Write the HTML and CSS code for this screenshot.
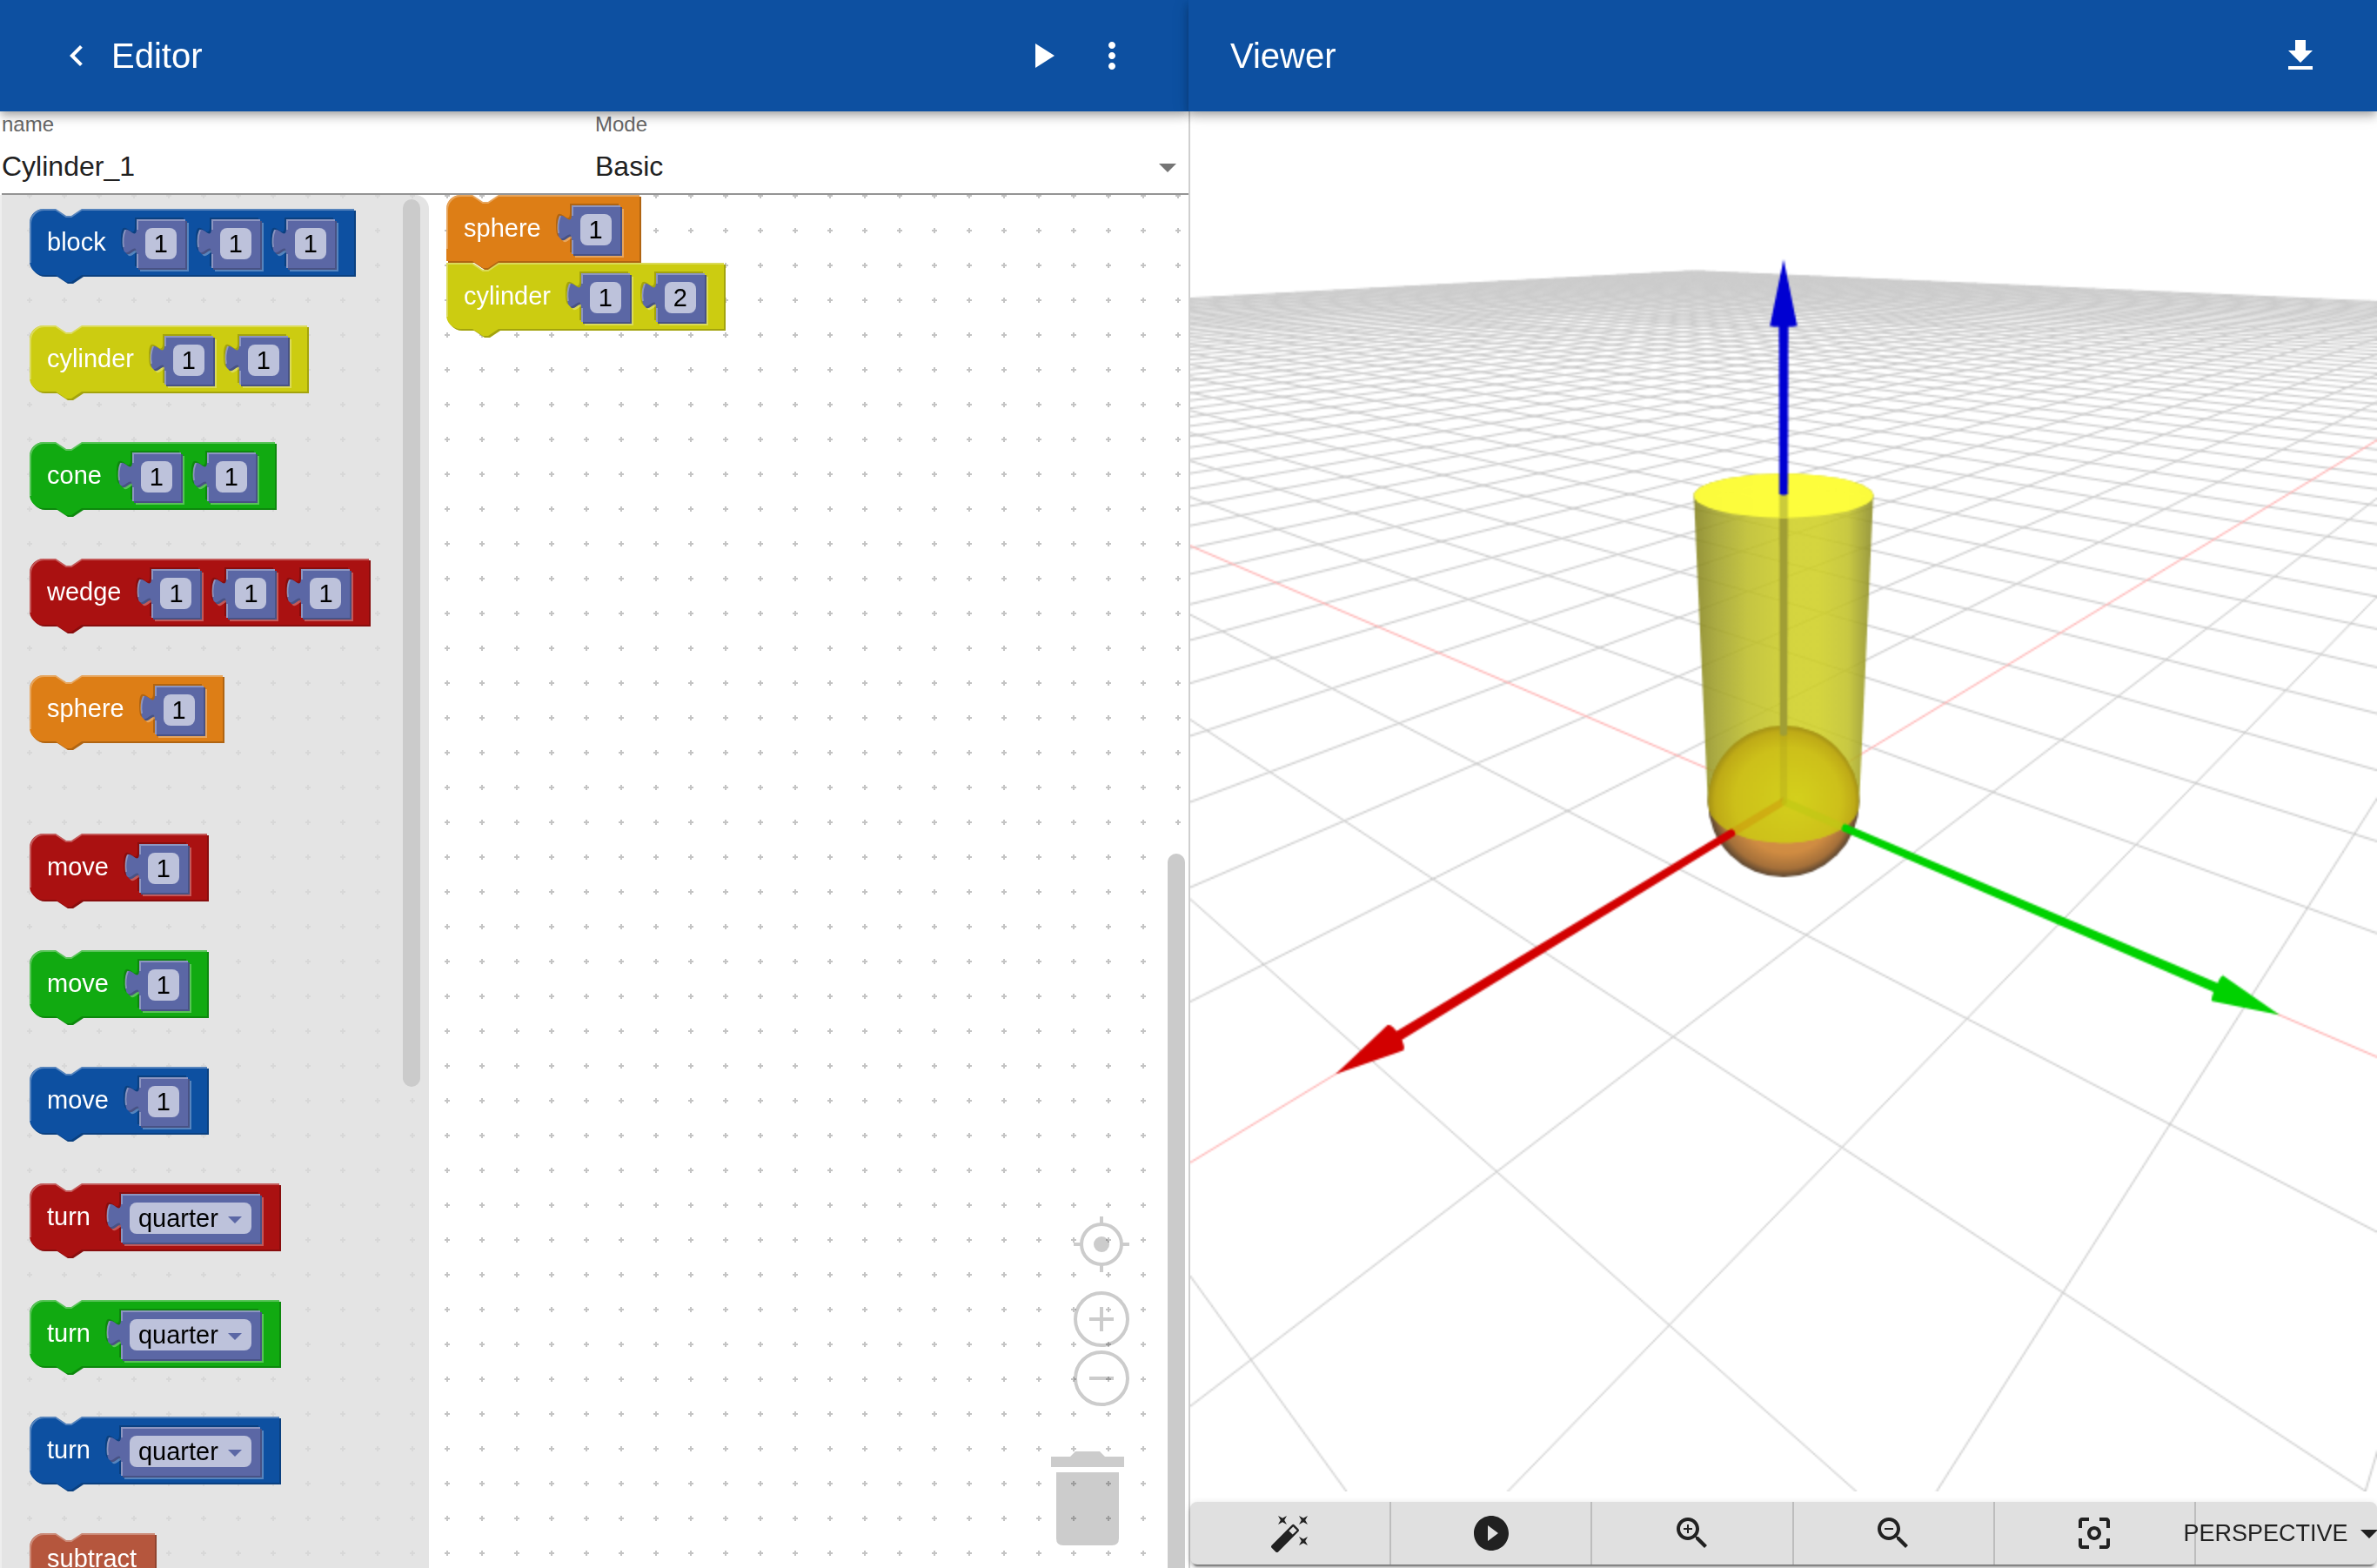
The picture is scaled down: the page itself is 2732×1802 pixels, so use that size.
FILE: index.html
```html
<!DOCTYPE html>
<html lang="en">
<head>
  <meta charset="UTF-8">
  <meta name="viewport" content="width=device-width, initial-scale=1.0">
  <title>Editor</title>
  <link rel="stylesheet" href="styles.css">
</head>
<body>
  <main class="app">
    <section class="editor">
      <header class="bar">
        <button class="icon-button" aria-label="Back">
          <svg class="icon" viewBox="0 0 24 24"><path d="M15.41 7.41L14 6l-6 6 6 6 1.41-1.41L10.83 12z"/></svg>
        </button>
        <h1 class="title">Editor</h1>
        <button class="icon-button" aria-label="Run">
          <svg class="icon" viewBox="0 0 24 24"><path d="M8 5v14l11-7z"/></svg>
        </button>
        <button class="icon-button" aria-label="More">
          <svg class="icon" viewBox="0 0 24 24"><path d="M12 8c1.1 0 2-.9 2-2s-.9-2-2-2-2 .9-2 2 .9 2 2 2zm0 2c-1.1 0-2 .9-2 2s.9 2 2 2 2-.9 2-2-.9-2-2-2zm0 6c-1.1 0-2 .9-2 2s.9 2 2 2 2-.9 2-2-.9-2-2-2z"/></svg>
        </button>
      </header>

      <form class="settings">
        <div class="field">
          <label for="modelName">name</label>
          <input type="text" id="modelName" value="Cylinder_1">
        </div>
        <div class="field field-select">
          <label for="mode">Mode</label>
          <select id="mode">
            <option>Basic</option>
            <option>Advanced</option>
          </select>
        </div>
      </form>

      <div class="workspace">
        <svg class="dots" aria-hidden="true">
          <defs>
            <pattern id="dot" width="40" height="40" x="12" y="-19" patternUnits="userSpaceOnUse">
              <path d="M17 20h6M20 17v6" stroke="#c4c4c4" stroke-width="2"/>
            </pattern>
          </defs>
          <rect width="100%" height="100%" fill="url(#dot)"/>
        </svg>

        <div class="flyout">
          <div class="toolbox">
            <div class="block blue"><span class="label">block</span>
              <div class="value"><input type="text" value="1" aria-label="block x"></div>
              <div class="value"><input type="text" value="1" aria-label="block y"></div>
              <div class="value"><input type="text" value="1" aria-label="block z"></div>
            </div>
            <div class="block yellow"><span class="label">cylinder</span>
              <div class="value"><input type="text" value="1" aria-label="cylinder diameter"></div>
              <div class="value"><input type="text" value="1" aria-label="cylinder height"></div>
            </div>
            <div class="block green"><span class="label">cone</span>
              <div class="value"><input type="text" value="1" aria-label="cone diameter"></div>
              <div class="value"><input type="text" value="1" aria-label="cone height"></div>
            </div>
            <div class="block red"><span class="label">wedge</span>
              <div class="value"><input type="text" value="1" aria-label="wedge x"></div>
              <div class="value"><input type="text" value="1" aria-label="wedge y"></div>
              <div class="value"><input type="text" value="1" aria-label="wedge z"></div>
            </div>
            <div class="block orange group-end"><span class="label">sphere</span>
              <div class="value"><input type="text" value="1" aria-label="sphere diameter"></div>
            </div>
            <div class="block red"><span class="label">move</span>
              <div class="value"><input type="text" value="1" aria-label="move x"></div>
            </div>
            <div class="block green"><span class="label">move</span>
              <div class="value"><input type="text" value="1" aria-label="move y"></div>
            </div>
            <div class="block blue"><span class="label">move</span>
              <div class="value"><input type="text" value="1" aria-label="move z"></div>
            </div>
            <div class="block red"><span class="label">turn</span>
              <div class="value value-select"><select aria-label="turn x"><option>quarter</option><option>half</option></select></div>
            </div>
            <div class="block green"><span class="label">turn</span>
              <div class="value value-select"><select aria-label="turn y"><option>quarter</option><option>half</option></select></div>
            </div>
            <div class="block blue"><span class="label">turn</span>
              <div class="value value-select"><select aria-label="turn z"><option>quarter</option><option>half</option></select></div>
            </div>
            <div class="block brick plain"><span class="label">subtract</span></div>
          </div>
          <div class="scrollbar"></div>
        </div>

        <div class="stack">
          <div class="block orange open-bottom"><span class="label">sphere</span>
            <div class="value"><input type="text" value="1" aria-label="sphere diameter"></div>
          </div>
          <div class="block yellow open-top"><span class="label">cylinder</span>
            <div class="value"><input type="text" value="1" aria-label="cylinder diameter"></div>
            <div class="value"><input type="text" value="2" aria-label="cylinder height"></div>
          </div>
        </div>

        <div class="tools">
          <button aria-label="Center">
            <svg width="64" height="64" viewBox="0 0 64 64" fill="none" stroke="#000" stroke-width="4">
              <circle cx="32" cy="32" r="23"/>
              <path d="M32 0v8M32 56v8M0 32h8M56 32h8"/>
              <circle cx="32" cy="32" r="9" fill="#000" stroke="none"/>
            </svg>
          </button>
          <button class="zoom-in" aria-label="Zoom in">
            <svg width="64" height="64" viewBox="0 0 64 64" fill="none" stroke="#000" stroke-width="4">
              <circle cx="32" cy="32" r="30"/>
              <path d="M18 32h28M32 18v28"/>
            </svg>
          </button>
          <button class="zoom-out" aria-label="Zoom out">
            <svg width="64" height="64" viewBox="0 0 64 64" fill="none" stroke="#000" stroke-width="4">
              <circle cx="32" cy="32" r="30"/>
              <path d="M18 32h28"/>
            </svg>
          </button>
          <button class="trash" aria-label="Trash">
            <svg width="94" height="120" viewBox="0 0 94 120">
              <path d="M4 12h22l6-6h28l6 6h22v12H4zM10 30h72v76q0 8-8 8H18q-8 0-8-8z"/>
            </svg>
          </button>
        </div>
        <div class="scrollbar scrollbar-main"></div>
      </div>
    </section>

    <section class="viewer">
      <header class="bar">
        <h1 class="title">Viewer</h1>
        <button class="icon-button" aria-label="Download">
          <svg class="icon" viewBox="0 0 24 24"><path d="M19 9h-4V3H9v6H5l7 7 7-7zM5 18v2h14v-2z"/></svg>
        </button>
      </header>
      <div class="stage">
        <canvas class="scene" id="scene"></canvas>
        <div class="toolbar">
          <button aria-label="Generate">
            <svg class="icon" viewBox="0 0 24 24"><path d="M7.5 5.6L10 7 8.6 4.5 10 2 7.5 3.4 5 2l1.4 2.5L5 7zm12 9.8L17 14l1.4 2.5L17 19l2.5-1.4L22 19l-1.4-2.5L22 14zM22 2l-2.5 1.4L17 2l1.4 2.5L17 7l2.5-1.4L22 7l-1.4-2.5zm-7.63 5.29a.9959.9959 0 00-1.41 0L1.29 18.96c-.39.39-.39 1.02 0 1.41l2.34 2.34c.39.39 1.02.39 1.41 0L16.7 11.05c.39-.39.39-1.02 0-1.41l-2.33-2.35zm-1.03 5.49l-2.12-2.12 2.44-2.44 2.12 2.12-2.44 2.44z"/></svg>
          </button>
          <button aria-label="Play">
            <svg class="icon" viewBox="0 0 24 24"><path d="M12 2C6.48 2 2 6.48 2 12s4.48 10 10 10 10-4.48 10-10S17.52 2 12 2zm-2 14.5v-9l6 4.5-6 4.5z"/></svg>
          </button>
          <button aria-label="Zoom in">
            <svg class="icon" viewBox="0 0 24 24"><path d="M15.5 14h-.79l-.28-.27C15.41 12.59 16 11.11 16 9.5 16 5.91 13.09 3 9.5 3S3 5.91 3 9.5 5.91 16 9.5 16c1.61 0 3.09-.59 4.23-1.57l.27.28v.79l5 4.99L20.49 19l-4.99-5zm-6 0C7.01 14 5 11.99 5 9.5S7.01 5 9.5 5 14 7.01 14 9.5 11.99 14 9.5 14z"/><path d="M12 10h-2v2H9v-2H7V9h2V7h1v2h2v1z"/></svg>
          </button>
          <button aria-label="Zoom out">
            <svg class="icon" viewBox="0 0 24 24"><path d="M15.5 14h-.79l-.28-.27C15.41 12.59 16 11.11 16 9.5 16 5.91 13.09 3 9.5 3S3 5.91 3 9.5 5.91 16 9.5 16c1.61 0 3.09-.59 4.23-1.57l.27.28v.79l5 4.99L20.49 19l-4.99-5zm-6 0C7.01 14 5 11.99 5 9.5S7.01 5 9.5 5 14 7.01 14 9.5 11.99 14 9.5 14zM7 9h5v1H7z"/></svg>
          </button>
          <button aria-label="Fit">
            <svg class="icon" viewBox="0 0 24 24"><path d="M5 15H3v4c0 1.100.9 2 2 2h4v-2H5v-4zM5 5h4V3H5c-1.100 0-2 .9-2 2v4h2V5zm14-2h-4v2h4v4h2V5c0-1.100-.9-2-2-2zm0 16h-4v2h4c1.100 0 2-.9 2-2v-4h-2v4zM12 8c-2.210 0-4 1.790-4 4s1.790 4 4 4 4-1.790 4-4-1.790-4-4-4zm0 6c-1.100 0-2-.9-2-2s.9-2 2-2 2 .9 2 2-.9 2-2 2z"/></svg>
          </button>
          <button>
            PERSPECTIVE
            <svg class="icon" viewBox="0 0 24 24"><path d="M7 10l5 5 5-5z"/></svg>
          </button>
        </div>
      </div>
    </section>
  </main>
  <script src="script.js"></script>
</body>
</html>
```
FILE: styles.css
```css
* {
  box-sizing: border-box;
}
body {
  margin: 0;
  font-family: "Liberation Sans", Arial, Helvetica, sans-serif;
  color: #212121;
  background: #fff;
}
button, input, select {
  font-family: inherit;
  border: none;
  background: none;
  padding: 0;
  margin: 0;
  color: inherit;
}
select {
  appearance: none;
}
.app {
  display: grid;
  grid-template-columns: 1fr 1fr;
  height: 100vh;
  overflow: hidden;
}
.editor, .viewer {
  display: flex;
  flex-direction: column;
  min-width: 0;
  min-height: 0;
}

/* top bars */
.bar {
  position: relative;
  z-index: 2;
  display: flex;
  align-items: center;
  flex: none;
  height: 128px;
  padding: 0 48px;
  background: #0d50a1;
  color: #fff;
  box-shadow: 0 4px 8px -2px rgba(0, 0, 0, 0.2), 0 8px 10px rgba(0, 0, 0, 0.14), 0 2px 20px rgba(0, 0, 0, 0.12);
}
.title {
  flex: 1;
  margin: 0;
  font-size: 40px;
  font-weight: normal;
}
.icon-button {
  padding: 16px;
  cursor: pointer;
}
.icon {
  display: block;
  flex: none;
  width: 48px;
  height: 48px;
  fill: currentColor;
}

/* name and mode */
.settings {
  display: grid;
  grid-template-columns: 1fr 1fr;
  padding-left: 2px;
}
.field {
  position: relative;
  display: flex;
  flex-direction: column;
  border-bottom: 2px solid #949494;
}
.field label {
  font-size: 24px;
  line-height: 30px;
  color: #666;
}
.field input, .field select {
  height: 64px;
  padding-top: 2px;
  font-size: 32px;
}
.field-select::after {
  content: "";
  position: absolute;
  right: 14px;
  bottom: 24px;
  width: 20px;
  height: 10px;
  background: #757575;
  clip-path: polygon(0 0, 100% 0, 50% 100%);
  pointer-events: none;
}

/* block workspace */
.workspace {
  position: relative;
  display: flex;
  flex: 1;
  min-height: 0;
  overflow: hidden;
  border-left: 2px solid #eee;
}
.dots {
  position: absolute;
  left: 0;
  top: 0;
  width: 100%;
  height: 100%;
}
.flyout {
  position: relative;
  display: flex;
  flex: none;
  width: 491px;
  padding: 5px 10px 0 32px;
  background: rgba(221, 221, 221, 0.8);
  border-top-right-radius: 16px;
}
.toolbox {
  display: flex;
  flex-direction: column;
  align-items: flex-start;
  flex: 1;
  gap: 56px;
  padding-top: 11px;
}
.group-end {
  margin-bottom: 48px;
}
.scrollbar {
  width: 20px;
  height: 1020px;
  border-radius: 10px;
  background: #cbcbcb;
}
.scrollbar-main {
  position: absolute;
  right: 4px;
  top: 48%;
  height: 60%;
}
.stack {
  position: relative;
  display: flex;
  flex-direction: column;
  align-items: flex-start;
  padding-left: 20px;
}

/* blocks, their outline is drawn by script.js */
.block {
  position: relative;
  isolation: isolate;
  display: flex;
  flex: none;
  height: 78px;
  padding: 0 22px 0 20px;
  font-size: 29px;
}
.shape {
  position: absolute;
  left: 0;
  top: 0;
  z-index: -1;
  width: 100%;
  height: 100%;
  overflow: visible;
}
.block.blue { color: #0d50a1; }
.block.yellow { color: #cccc11; }
.block.green { color: #11aa11; }
.block.red { color: #aa1111; }
.block.orange { color: #dd7e16; }
.block.brick { color: #b5563d; }
.shape .fill {
  fill: currentColor;
}
.shape .dark {
  fill: rgba(0, 0, 0, 0.2);
}
.shape .light {
  fill: rgba(255, 255, 255, 0.3);
}
.shape .edge {
  fill: none;
  stroke: rgba(255, 255, 255, 0.3);
  stroke-width: 2;
}
.shape .number {
  fill: #5b67a5;
}
.label {
  margin-right: 7px;
  line-height: 76px;
  color: #fff;
}
.plain {
  padding-right: 16px;
}
.plain .label {
  line-height: 58px;
}
.value {
  position: relative;
  flex: none;
  height: 58px;
  margin: 12px 0 0 12px;
  padding: 10px 12px 12px 26px;
}
.value input, .value select {
  display: block;
  height: 36px;
  border-radius: 8px;
  background: #bdc2db;
  color: #000;
  font-size: 29px;
}
.value input {
  width: 36px;
  text-align: center;
}
.value select {
  width: 140px;
  padding-left: 10px;
}
.value-select::after {
  content: "";
  position: absolute;
  right: 23px;
  top: 26px;
  width: 16px;
  height: 8px;
  background: #5b67a5;
  clip-path: polygon(0 0, 100% 0, 50% 100%);
  pointer-events: none;
}

/* floating workspace buttons */
.tools {
  position: absolute;
  right: 68px;
  bottom: 20px;
  display: flex;
  flex-direction: column;
  align-items: flex-end;
}
.tools button {
  opacity: 0.2;
  cursor: pointer;
}
.tools svg {
  display: block;
}
.zoom-in {
  margin-top: 22px;
}
.zoom-out {
  margin-top: 4px;
}
.trash {
  margin-top: 46px;
}

/* viewer */
.stage {
  display: flex;
  flex-direction: column;
  flex: 1;
  min-height: 0;
  border-left: 2px solid #cfcfcf;
}
.scene {
  display: block;
  flex: 1;
  width: 100%;
  min-height: 0;
}
.toolbar {
  display: grid;
  grid-template-columns: repeat(5, minmax(0, 10fr)) minmax(0, 9fr);
  flex: none;
  height: 72px;
  margin: 12px 0 4px;
  border-radius: 8px;
  background: #e0e0e0;
  box-shadow: 0 6px 2px -4px rgba(0, 0, 0, 0.4), 0 4px 4px rgba(0, 0, 0, 0.2), 0 2px 10px rgba(0, 0, 0, 0.12);
}
.toolbar button {
  display: flex;
  align-items: center;
  justify-content: center;
  font-size: 27px;
  white-space: nowrap;
  cursor: pointer;
}
.toolbar button:not(:last-child) {
  border-right: 2px solid #bdbdbd;
}
```
FILE: script.js
```js
// ---------- block outlines ----------

const TAB = "V10c0 20-16-16-16 15s16-5 16 15";

function valuePath(w, h) {
  return `M0 0${TAB}V${h}H${w}V0z`;
}

function blockPath(w, h, openTop, openBottom) {
  const top = openTop ? "M0 0H30" : "M0 16A16 16 0 0 1 16 0H30";
  const bottom = openBottom ? "H0z" : `H16A16 16 0 0 1 0 ${h - 16}z`;
  return `${top}l12 8h6l12-8H${w}V${h}H60l-12 8h-6l-12-8${bottom}`;
}

function drawBlock(block) {
  const w = block.offsetWidth - 2;
  const h = block.offsetHeight - 2;
  const openTop = block.classList.contains("open-top");
  const openBottom = block.classList.contains("open-bottom");
  const outline = blockPath(w, h, openTop, openBottom);
  const edgeTop = openTop ? "V1H30" : "V17A16 16 0 0 1 17 1H30";

  let svg = `<g transform="translate(2 2)"><path class="fill" d="${outline}"/><path class="dark" d="${outline}"/></g>
    <path class="fill" d="${outline}"/>
    <path class="edge" d="M1 ${h - 14}${edgeTop}l12 8h6l12-8H${w}"/>`;

  block.querySelectorAll(".value").forEach(value => {
    const vw = value.offsetWidth - 18;
    const vh = value.offsetHeight - 2;
    const d = valuePath(vw, vh);
    svg += `<g transform="translate(${value.offsetLeft + 16} ${value.offsetTop})">
      <path class="dark" d="${d}" transform="translate(-2 -2)"/>
      <path class="light" d="${d}" transform="translate(4 4)"/>
      <g transform="translate(2 2)"><path class="number" d="${d}"/><path class="dark" d="${d}"/></g>
      <path class="number" d="${d}"/>
      <path class="edge" d="M1 ${vh}V40M-15 32Q-17 22-13 12M1 12V1H${vw}"/>
    </g>`;
  });

  const shape = document.createElementNS("http://www.w3.org/2000/svg", "svg");
  shape.setAttribute("class", "shape");
  shape.innerHTML = svg;
  block.prepend(shape);
}

document.querySelectorAll(".block").forEach(drawBlock);

// ---------- 3D view ----------

const canvas = document.getElementById("scene");
const ctx = canvas.getContext("2d");

const FOV = 70 * Math.PI / 180;
const DISTANCE = 6.53;
const ELEVATION = 30.8 * Math.PI / 180;
const AZIMUTH = 49.93 * Math.PI / 180;
const GRID = 50;
const NEAR = 0.1;

const sinE = Math.sin(ELEVATION), cosE = Math.cos(ELEVATION);
const sinA = Math.sin(AZIMUTH), cosA = Math.cos(AZIMUTH);
let width, height, focal;

function toCamera([x, y, z]) {
  const u = -x * cosA + y * sinA;
  const v = -x * sinA - y * cosA;
  return [u, v * sinE + z * cosE, DISTANCE + v * cosE - z * sinE];
}

function toScreen([cx, cy, depth]) {
  return [width / 2 + focal * cx / depth, height / 2 - focal * cy / depth];
}

function project(p) {
  return toScreen(toCamera(p));
}

function line(from, to, color) {
  let a = toCamera(from), b = toCamera(to);
  if (a[2] < NEAR && b[2] < NEAR) return;
  if (a[2] > b[2]) [a, b] = [b, a];
  if (a[2] < NEAR) {
    const t = (NEAR - a[2]) / (b[2] - a[2]);
    a = a.map((n, i) => n + (b[i] - n) * t);
  }
  ctx.strokeStyle = color;
  ctx.beginPath();
  ctx.moveTo(...toScreen(a));
  ctx.lineTo(...toScreen(b));
  ctx.stroke();
}

// convex hull of projected points
function hull(points) {
  const sorted = points.map(project).sort((a, b) => a[0] - b[0] || a[1] - b[1]);
  const half = list => {
    const out = [];
    for (const p of list) {
      while (out.length > 1) {
        const [a, b] = out.slice(-2);
        if ((b[0] - a[0]) * (p[1] - a[1]) - (b[1] - a[1]) * (p[0] - a[0]) > 0) break;
        out.pop();
      }
      out.push(p);
    }
    out.pop();
    return out;
  };
  const path = new Path2D();
  [...half(sorted), ...half(sorted.reverse())].forEach(p => path.lineTo(...p));
  path.closePath();
  return path;
}

// circle of points around one of the axes (0 = x, 1 = y, 2 = z)
function ring(axis, at, radius) {
  const points = [];
  for (let i = 0; i < 48; i++) {
    const t = i / 24 * Math.PI;
    const p = [0, 0, 0];
    p[axis] = at;
    p[(axis + 1) % 3] = radius * Math.cos(t);
    p[(axis + 2) % 3] = radius * Math.sin(t);
    points.push(p);
  }
  return points;
}

function shaft(axis, from, to, color) {
  ctx.fillStyle = color;
  ctx.fill(hull([...ring(axis, from, 0.024), ...ring(axis, to, 0.024)]));
}

function arrow(axis, from, color) {
  const tip = [0, 0, 0];
  tip[axis] = 3.15;
  shaft(axis, from, 2.9, color);
  ctx.fill(hull([...ring(axis, 2.85, 0.07), tip]));
}

function gradient(g, stops) {
  stops.forEach(([at, color]) => g.addColorStop(at, color));
  return g;
}

function render() {
  // one canvas pixel covers two page pixels
  width = canvas.width = Math.round(canvas.clientWidth / 2);
  height = canvas.height = Math.round(canvas.clientHeight / 2);
  focal = height / 2 / Math.tan(FOV / 2);

  for (let i = -GRID; i <= GRID; i++) {
    if (i === 0) continue;
    line([i, -GRID, 0], [i, GRID, 0], "#cccccc");
    line([-GRID, i, 0], [GRID, i, 0], "#cccccc");
  }
  line([-GRID, 0, 0], [GRID, 0, 0], "#ffb0b0");
  line([0, -GRID, 0], [0, GRID, 0], "#ffb0b0");

  const [ox, oy] = project([0, 0, 0]);
  const r = focal * 0.5 / Math.sqrt(DISTANCE * DISTANCE - 0.25);
  const ball = new Path2D();
  ball.arc(ox, oy, r, 0, Math.PI * 2);

  ctx.fillStyle = gradient(ctx.createRadialGradient(ox + 5, oy + 4, 0, ox, oy, r), [
    [0, "#dd9644"], [0.65, "#d08c42"], [0.88, "#a5703a"], [1, "#594430"]
  ]);
  ctx.fill(ball);

  const body = hull([...ring(2, 0, 0.5), ...ring(2, 2, 0.5)]);
  const rim = hull(ring(2, 2, 0.5));
  const left = ox - r * 1.18, right = ox + r * 1.18;
  ctx.fillStyle = gradient(ctx.createLinearGradient(left, 0, right, 0), [
    [0, "rgba(130,128,26,.86)"], [0.12, "rgba(158,158,36,.86)"], [0.3, "rgba(188,188,36,.86)"],
    [0.55, "rgba(206,206,32,.86)"], [0.7, "rgba(206,206,32,.86)"], [0.86, "rgba(192,192,36,.86)"],
    [1, "rgba(136,136,34,.86)"]
  ]);
  ctx.fill(body);

  ctx.save();
  ctx.clip(body);
  ctx.fillStyle = gradient(ctx.createRadialGradient(ox + 8, oy - 2, 0, ox, oy, r), [
    [0, "#d4d01c"], [0.7, "#cdc01a"], [0.92, "#bfab17"], [1, "#a39016"]
  ]);
  ctx.fill(ball);
  ctx.restore();

  // axes as seen through the solids
  shaft(2, 0, 0.5, "rgba(170,160,30,.3)");
  shaft(0, 0, 0.5, "rgba(205,150,10,.5)");
  shaft(1, 0, 0.5, "rgba(190,200,20,.6)");
  shaft(2, 0.5, 2, "#a09e34");

  ctx.fillStyle = "rgba(255,255,60,.96)";
  ctx.fill(rim);
  ctx.save();
  ctx.clip(rim);
  shaft(2, 1.5, 2, "#cbcb3a");
  ctx.restore();

  arrow(0, 0.5, "#d20000");
  arrow(1, 0.5, "#00d200");
  arrow(2, 2, "#0000d2");
}

render();
window.addEventListener("resize", render);
```
